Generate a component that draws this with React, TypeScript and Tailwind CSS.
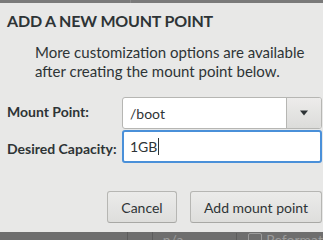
export default function App() {
  return (
    <div className="w-[323px] h-[240px] bg-[#e8e8e7] flex flex-col overflow-hidden text-[#2e3436] font-['Lato',sans-serif]">
      {/* strip of the window behind, top */}
      <div className="h-[3px] flex bg-[#7a7a7a] shrink-0">
        <div className="w-[131px] border-r border-[#8a8a8a]" />
      </div>

      <div className="flex-1 flex flex-col pl-[7px] pr-[1px]">
        <h1 className="mt-[8px] text-[16px] leading-[20px] font-bold tracking-[-0.2px]">ADD A NEW MOUNT POINT</h1>
        <p className="mt-[12px] ml-[28px] text-[15px] leading-[19px]">
          More customization options are available
          <br />
          after creating the mount point below.
        </p>

        <div className="mt-[16px] grid grid-cols-[115px_1fr] gap-y-[1px] items-start">
          <label className="pt-[6px] text-[14px] leading-[17px] font-bold">Mount Point:</label>
          <div className="h-[32px] flex bg-white border border-[#b6b6b3] rounded-[3px] overflow-hidden">
            <div className="flex-1 flex items-center pl-[7px] text-[14px]">/boot</div>
            <div className="w-[35px] flex items-center justify-center border-l border-[#b6b6b3] bg-gradient-to-b from-[#edeceb] to-[#dcdcda]">
              <svg width="10" height="6" viewBox="0 0 10 6">
                <path d="M1 0.5 L9 0.5 L5 5.5 Z" fill="#2e3436" />
              </svg>
            </div>
          </div>

          <label className="pt-[10px] text-[14px] leading-[17px] font-bold">Desired Capacity:</label>
          <div className="h-[33px] flex items-center bg-white border-2 border-[#4a90d9] rounded-[3px] pl-[6px] text-[14px]">
            <span>1GB</span>
            <span className="w-[1px] h-[17px] bg-[#2e3436] ml-[1px]" />
          </div>
        </div>

        <div className="mt-[28px] flex justify-end gap-[13px]">
          <button className="w-[70px] h-[32px] rounded-[3px] border border-[#b6b6b3] border-b-[#a8a8a5] bg-gradient-to-b from-[#ebebea] to-[#dededc] text-[14px] text-[#2e3436]">
            Cancel
          </button>
          <button className="w-[132px] h-[32px] rounded-[3px] border border-[#b6b6b3] border-b-[#a8a8a5] bg-gradient-to-b from-[#ebebea] to-[#dededc] text-[14px] text-[#2e3436]">
            Add mount point
          </button>
        </div>
      </div>

      {/* strip of the window behind, bottom */}
      <div className="h-[8px] shrink-0 flex bg-[#6e6e6e] overflow-hidden text-[14px] leading-[14px] text-[#9c9c9c]">
        <div className="w-[131px] border-r border-[#5c5c5c]" />
        <div className="w-[25px] border-r border-[#5c5c5c]" />
        <div className="w-[86px] border-r border-[#5c5c5c] pl-[10px] mt-[1px]">n/a</div>
        <div className="flex-1 flex items-start pl-[11px] gap-[4px] mt-[1px]">
          <span className="w-[14px] h-[12px] border border-[#9c9c9c] rounded-[2px]" />
          <span>Reformat</span>
        </div>
      </div>
    </div>
  );
}
